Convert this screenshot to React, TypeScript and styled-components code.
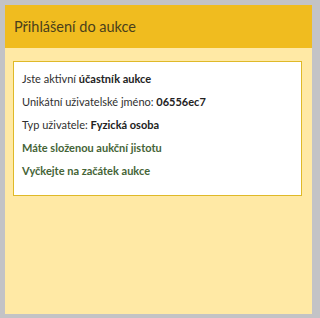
import React from "react";
import styled, { createGlobalStyle } from "styled-components";

const Global = createGlobalStyle`
  html, body { margin: 0; padding: 0; background: #c3c3c6; }
  body { font-family: Lato, "Open Sans", sans-serif; }
`;

const Page = styled.div`
  width: 317px;
  height: 318px;
  padding: 5px 5px 4px 5px;
  box-sizing: border-box;
  background: #c3c3c6;
`;

const Panel = styled.section`
  height: 100%;
  background: #ffe9a5;
  display: flex;
  flex-direction: column;
`;

const Header = styled.header`
  height: 43px;
  background: #f0bc1f;
  display: flex;
  align-items: center;
  padding-left: 9px;
  font-size: 14.5px;
  color: #4a3f1c;
`;

const Body = styled.div`
  padding: 13px 10px 0 8px;
`;

const Box = styled.div`
  background: #fff;
  border: 1px solid #dfb928;
  padding: 5px 8px 13px 8px;
  font-size: 11px;
  color: #2f2f2f;
`;

const Line = styled.div<{ $accent?: boolean }>`
  line-height: 23px;
  white-space: nowrap;
  ${(p) => (p.$accent ? "color: #456437; font-weight: 700;" : "")}
`;

const B = styled.b`
  font-weight: 700;
  color: #222;
`;

export default function App() {
  return (
    <>
      <Global />
      <Page>
        <Panel>
          <Header>Přihlášení do aukce</Header>
          <Body>
            <Box>
              <Line>
                Jste aktivní <B>účastník aukce</B>
              </Line>
              <Line>
                Unikátní uživatelské jméno: <B>06556ec7</B>
              </Line>
              <Line>
                Typ uživatele: <B>Fyzická osoba</B>
              </Line>
              <Line $accent>Máte složenou aukční jistotu</Line>
              <Line $accent>Vyčkejte na začátek aukce</Line>
            </Box>
          </Body>
        </Panel>
      </Page>
    </>
  );
}
